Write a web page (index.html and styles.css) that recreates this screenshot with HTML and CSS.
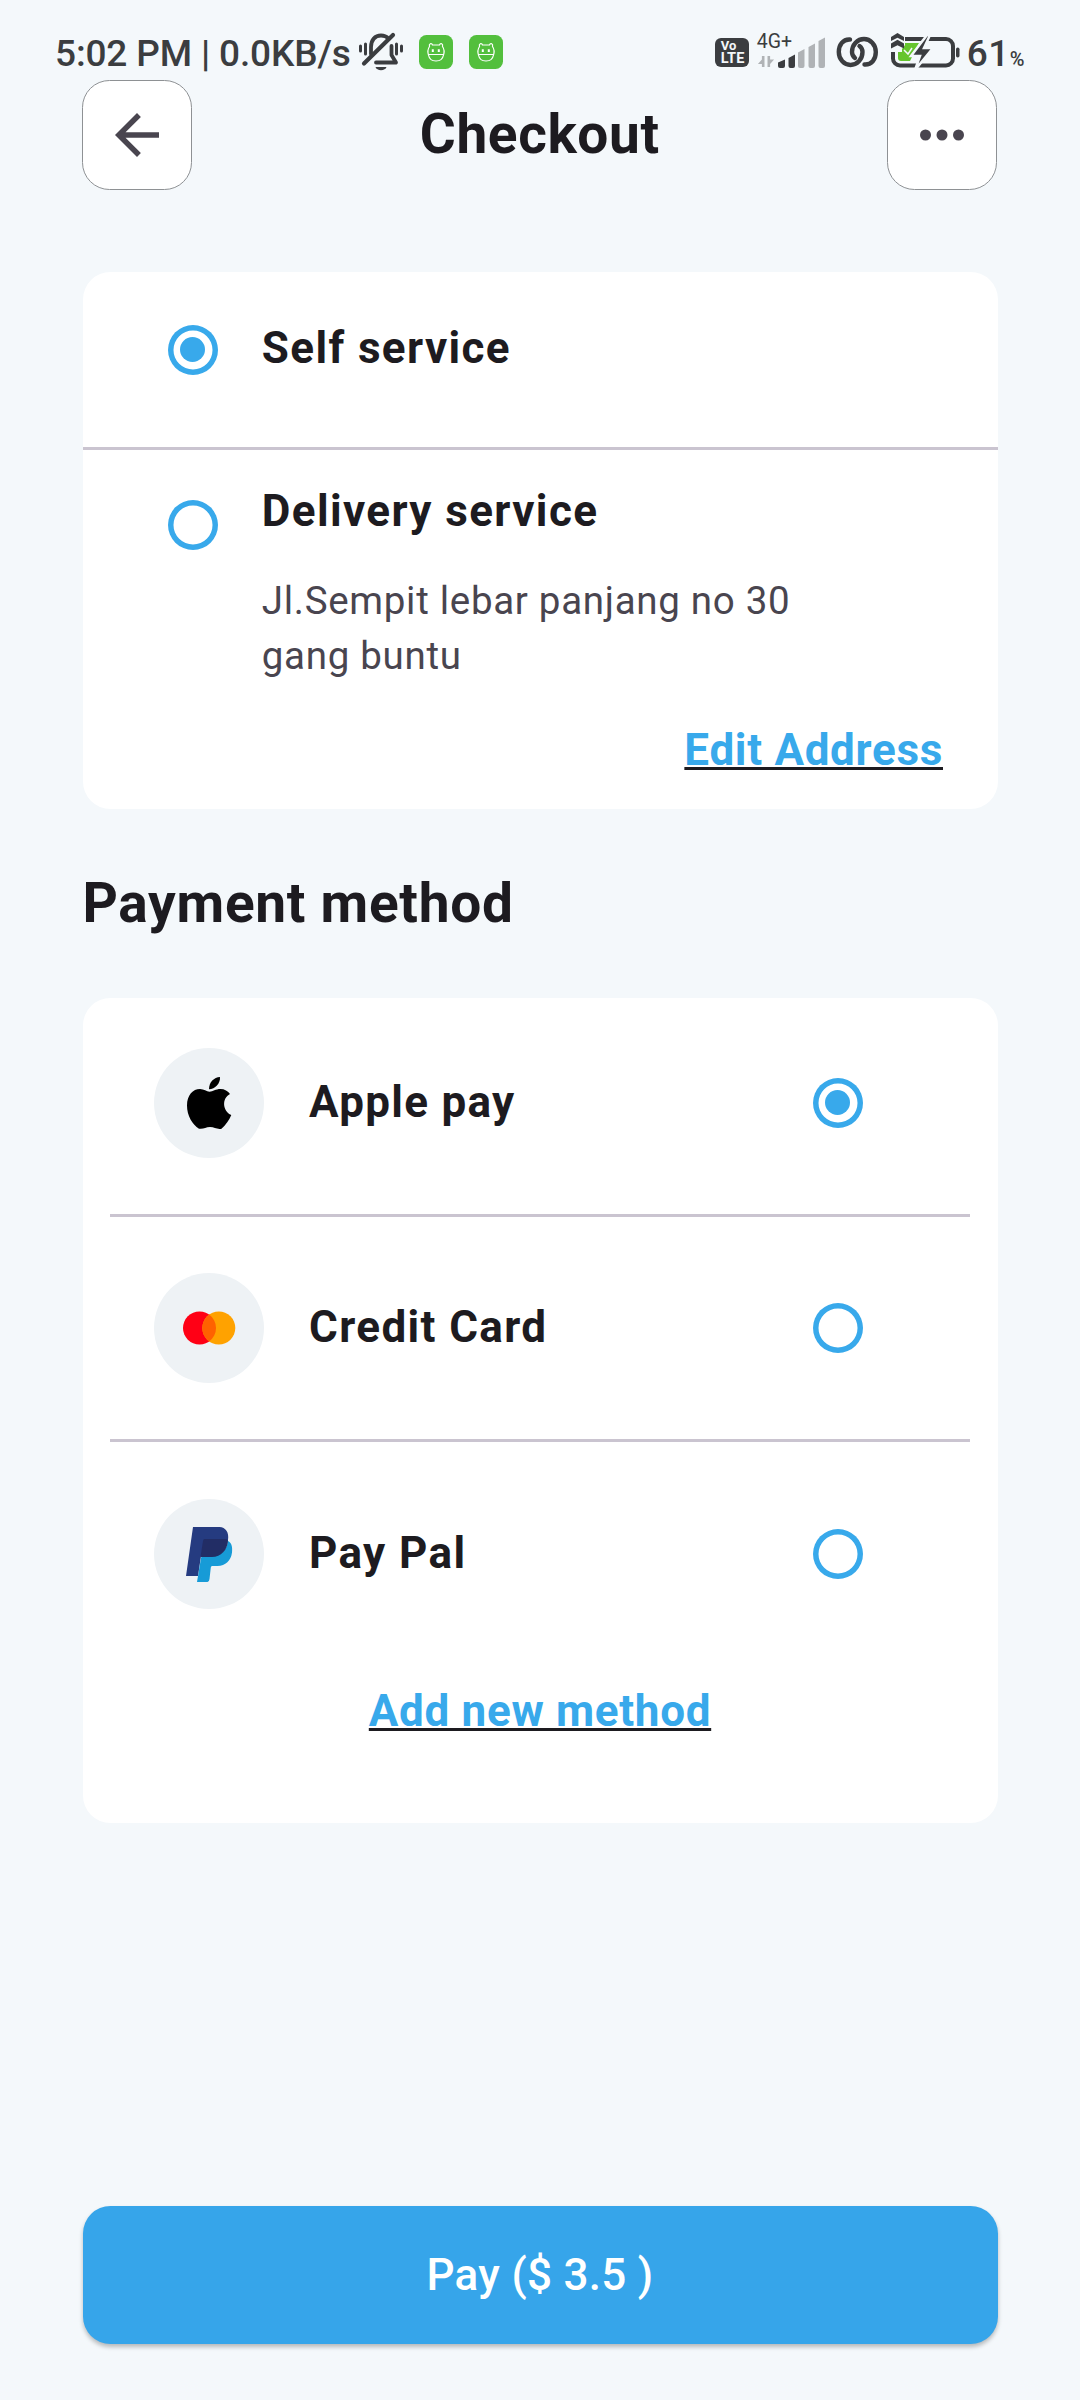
FILE: index.html
```html
<!DOCTYPE html>
<html lang="en">
<head>
<meta charset="utf-8">
<title>Checkout</title>
<link rel="stylesheet" href="styles.css">
</head>
<body>
<div class="screen">
  <div class="status">
    <div class="status-left">
      <span class="clock">5:02 PM | 0.0KB/s</span>
      <svg class="ic-bell" width="48" height="44" viewBox="0 0 48 44" fill="none" stroke="#3b3d40" stroke-linecap="round" stroke-linejoin="round">
        <path d="M3.500 16v5M8.500 14v10M39.500 14v10M44.500 16v5" stroke-width="3"/>
        <path d="M14 24V17c0-7 4-11.500 10-11.500 3 0 5.500 1 7.500 3" stroke-width="3.800"/>
        <path d="M34.500 16v9l4.500 7.500H19" stroke-width="3.800"/>
        <path d="M7 33.500L36 5" stroke-width="4.200"/>
        <path d="M18.500 37h11c-1 4.200-10 4.200-11 0z" fill="#3b3d40" stroke="none"/>
      </svg>
      <svg class="ic-app" width="34" height="34" viewBox="0 0 34 34">
        <rect width="34" height="34" rx="7.500" fill="#53bf3d"/>
        <path d="M10.500 11.500c-.8-3 2-4 3-1.500h7c1-2.500 3.800-1.500 3 1.500 2 3 1.500 7 1 8.500-1.500 8-13.500 8-15 0-.5-1.500-1-5.500 1-8.500zM9.500 19.500h15" fill="none" stroke="#fff" stroke-width="1.200"/>
        <path d="M13.800 14.200v2.800M19.800 14.200v2.800" stroke="#fff" stroke-width="2"/>
      </svg>
      <svg class="ic-app" width="34" height="34" viewBox="0 0 34 34">
        <rect width="34" height="34" rx="7.500" fill="#53bf3d"/>
        <path d="M10.500 11.500c-.8-3 2-4 3-1.500h7c1-2.500 3.800-1.500 3 1.500 2 3 1.500 7 1 8.500-1.500 8-13.500 8-15 0-.5-1.500-1-5.500 1-8.500zM9.500 19.500h15" fill="none" stroke="#fff" stroke-width="1.200"/>
        <path d="M13.800 14.200v2.800M19.800 14.200v2.800" stroke="#fff" stroke-width="2"/>
      </svg>
    </div>
    <div class="status-right">
      <div class="volte"><span class="vo">Vo</span><span class="lte">LTE</span></div>
      <div class="signal">
        <span class="net">4G+</span>
        <svg width="68" height="34" viewBox="757 36 68 34">
          <path d="M764.500 56v11h-2.600v-3h-4l4-4.500V56zM767.500 67V56h2.600v3.500h4l-4 4.500V67z" fill="#b0b3b6"/>
          <path d="M778 62.500l7-3V66q0 2-2 2h-3q-2 0-2-2z M788.500 58l6.500-3.500V66q0 2-2 2h-2.500q-2 0-2-2z" fill="#3b3d40"/>
          <path d="M798 52.500l6.500-3.500V66q0 2-2 2H800q-2 0-2-2z M808.500 47l6.500-3.500V66q0 2-2 2h-2.500q-2 0-2-2z M818.500 41l6.500-3.500V66q0 2-2 2h-2.500q-2 0-2-2z" fill="#b0b3b6"/>
        </svg>
      </div>
      <svg class="ic-link" width="42" height="32" viewBox="836 36 42 32" fill="none" stroke="#3b3d40" stroke-width="4.400" stroke-linecap="round">
        <path d="M850 39.500C843 39 838.800 45 838.800 52c0 7.500 5.500 13 11.700 13 6.500 0 12-5.500 12-13 0-2.500-1-4.500-3-6"/>
        <path d="M864.500 64.500c7 .5 11.300-5 11.300-12.500 0-7.500-5.500-13-11.800-13-6.500 0-12 5.500-12 13 0 2.500 1 4.500 3 6"/>
      </svg>
      <svg class="ic-batt" width="70" height="36" viewBox="890 33 70 36">
        <rect x="893" y="39" width="60" height="26.500" rx="7" fill="none" stroke="#3b3d40" stroke-width="4"/>
        <rect x="956" y="47.500" width="3.500" height="10" rx="1.700" fill="#3b3d40"/>
        <path d="M898 43h21l-9 18h-9q-3 0-3-3z" fill="#66c52e"/>
        <path d="M890 33h15v12l-3 4v3h-12z" fill="#f4f8fb"/>
        <path d="M891 41v-4l6.500-4 6.500 4v4l-6.500-3.200zM891 48.500v-5l6.500-3.700 6.500 3.700v5l-6.500-3.200z" fill="#3b3d40"/>
        <path d="M904 50l4 4 4-6" fill="none" stroke="#f4f8fb" stroke-width="1.500"/>
        <path d="M927 35l-16 21h9l-5 14 18-22h-9l6-13z" fill="#3b3d40" stroke="#f4f8fb" stroke-width="2.500"/>
      </svg>
      <span class="level">61</span><span class="pct">%</span>
    </div>
  </div>

  <header class="bar">
    <button class="square" aria-label="Back">
      <svg width="66" height="66" viewBox="0 0 24 24" fill="#49454f"><path d="M20 11H7.830l5.590-5.590L12 4l-8 8 8 8 1.410-1.410L7.830 13H20v-2z"/></svg>
    </button>
    <h1 class="title">Checkout</h1>
    <button class="square" aria-label="More">
      <svg width="66" height="66" viewBox="0 0 24 24" fill="#49454f"><circle cx="6" cy="12" r="2"/><circle cx="12" cy="12" r="2"/><circle cx="18" cy="12" r="2"/></svg>
    </button>
  </header>

  <main class="content">
    <section class="card service">
      <div class="option self">
        <span class="radio on"></span>
        <span class="label">Self service</span>
      </div>
      <div class="option delivery">
        <span class="radio"></span>
        <div class="details">
          <span class="label">Delivery service</span>
          <p class="address">Jl.Sempit lebar panjang no 30<br>gang buntu</p>
        </div>
      </div>
      <a class="link edit">Edit Address</a>
    </section>

    <h2 class="heading">Payment method</h2>

    <section class="card payment">
      <div class="method">
        <span class="avatar"><svg width="110" height="110" viewBox="0 0 110 110"><path d="M55 41.300C55 34 60 29.500 66 29c.5 6.500-5 12-11 12.300z"/><path d="M55.500 43.700c3.500 0 6-2.700 11-2.700 4 0 7.500 2 9.500 5-8.500 4.500-7.500 17 1.300 21-2 5-5.500 10-9.800 13.700-4.500 1-7-1.700-11.500-1.700-4.500 0-6.500 2.500-11 1.700C38.500 76.500 33 68 33 57.500 33 47 39 41 46 41c4 0 6.500 2.700 9.500 2.700z"/></svg></span>
        <span class="label apple">Apple pay</span>
        <span class="radio on"></span>
      </div>
      <div class="method">
        <span class="avatar"><svg width="110" height="110" viewBox="0 0 110 110"><circle cx="45.500" cy="55" r="16.500" fill="#ff0015"/><circle cx="64.800" cy="55" r="16.500" fill="#ffa200"/><path d="M55.150 41.600a16.500 16.500 0 0 1 0 26.800a16.500 16.500 0 0 1 0-26.800z" fill="#ff6200"/></svg></span>
        <span class="label">Credit Card</span>
        <span class="radio"></span>
      </div>
      <div class="method">
        <span class="avatar"><svg width="110" height="110" viewBox="0 0 110 110"><path d="M39 28h26.500c6 0 9.800 5.500 8.500 13-1.500 9-7.500 16-16 16H47l-3 20H32z" fill="#253b80"/><path d="M74 42c3.500 1.500 4.700 6 4 11.500C77 61.500 71.500 67 63.500 67H58q-1 0-1.200 1.500L55.500 80q-.3 3-2 3H43l4-24q.3-2 2.500-2H58c9 0 15-6.500 16-15z" fill="#179bd7"/><path d="M50.500 40H72q1 0 2 1.500C73.500 51 67 58 58 58H46.500L49 42q.2-2 1.500-2z" fill="#222d65"/></svg></span>
        <span class="label">Pay Pal</span>
        <span class="radio"></span>
      </div>
      <a class="link add">Add new method</a>
    </section>
  </main>

  <button class="pay">Pay ($ 3.5 )</button>
</div>
</body>
</html>
```
FILE: styles.css
```css
* { box-sizing: border-box; }
body {
  margin: 0;
  background: #f4f8fb;
  font-family: Roboto, "Liberation Sans", sans-serif;
  color: #1d1b20;
}
button { font: inherit; padding: 0; border: 0; }
h1, h2, p { margin: 0; }
svg { display: block; flex: none; }

.screen {
  width: 1080px;
  height: 2400px;
  display: flex;
  flex-direction: column;
}

/* Status bar */
.status {
  height: 80px;
  padding: 0 55.500px 0 55px;
  display: flex;
  justify-content: space-between;
  color: #3b3d40;
}
.status-left, .status-right { display: flex; align-items: flex-start; white-space: nowrap; }
.clock {
  width: 301px;
  margin-top: 34px;
  font-size: 37px;
  line-height: 40px;
  font-weight: 500;
  letter-spacing: -0.15px;
}
.ic-bell { margin: 30px 0 0 1px; }
.ic-app { margin: 35px 0 0 14px; }
.ic-app + .ic-app { margin-left: 16px; }
.volte {
  width: 34px;
  height: 29px;
  margin-top: 38px;
  padding: 2px 0 0 6px;
  border-radius: 6px;
  background: #3b3d40;
  color: #f4f8fb;
  display: flex;
  flex-direction: column;
  font-weight: 700;
  font-size: 13px;
  line-height: 12px;
}
.lte { font-size: 14.500px; line-height: 13px; letter-spacing: 0.1px; }
.signal { position: relative; margin: 36px 0 0 8px; }
.net {
  position: absolute;
  left: 0;
  top: -5px;
  font-size: 19.500px;
  line-height: 22px;
}
.ic-link { margin: 36px 0 0 11px; }
.ic-batt { margin: 33px 0 0 12px; }
.level {
  width: 42px;
  margin: 34px 0 0 7px;
  font-size: 37px;
  line-height: 40px;
  font-weight: 500;
  letter-spacing: 0.5px;
}
.pct { margin: 46px 0 0 1px; font-size: 20px; line-height: 26px; font-weight: 500; }

/* Header */
.bar {
  height: 110px;
  padding: 0 82.500px 0 82px;
  display: flex;
  align-items: center;
  justify-content: space-between;
}
.square {
  width: 110px;
  height: 110px;
  border: 1px solid #8e9194;
  border-radius: 27.500px;
  background: #fff;
  display: flex;
  align-items: center;
  justify-content: center;
}
.title {
  font-size: 55px;
  line-height: 64px;
  font-weight: 700;
  letter-spacing: 0.6px;
  margin-bottom: 2px;
}

/* Cards */
.content { padding: 82.400px 82.500px 0; flex: 1; }
.card { background: #fff; border-radius: 27.500px; }
.label {
  font-size: 44px;
  line-height: 52px;
  font-weight: 700;
  letter-spacing: 1.38px;
  white-space: nowrap;
}
.radio {
  flex: none;
  width: 50px;
  height: 50px;
  border-radius: 50%;
  box-shadow: inset 0 0 0 5.500px #38a9eb;
  display: flex;
  align-items: center;
  justify-content: center;
}
.radio.on::after {
  content: "";
  width: 25px;
  height: 25px;
  border-radius: 50%;
  background: #38a9eb;
}
.link {
  font-size: 44px;
  line-height: 52px;
  font-weight: 700;
  color: #38a9eb;
  letter-spacing: 0.69px;
  text-decoration: underline #1d1b20 3px;
  text-underline-offset: 2px;
  text-decoration-skip-ink: none;
}

.service { height: 536.200px; display: flex; flex-direction: column; }
.option { display: flex; align-items: flex-start; padding-left: 85px; gap: 44.300px; }
.self { height: 177.600px; padding-top: 52.300px; border-bottom: 3px solid #cac4d0; }
.self .label { margin-top: -2.300px; }
.delivery { height: 274px; padding-top: 35px; }
.delivery .radio { margin-top: 15.500px; }
.details { display: flex; flex-direction: column; }
.address {
  margin-top: 36px;
  font-size: 38.500px;
  line-height: 55px;
  letter-spacing: 0.7px;
  color: #49454f;
}
.edit { align-self: flex-end; margin-right: 54.500px; }

.heading {
  margin: 62px 0 63.300px;
  font-size: 55px;
  line-height: 64px;
  font-weight: 700;
  letter-spacing: 0.72px;
}

.payment { height: 825px; padding: 0 27.500px; display: flex; flex-direction: column; }
.method {
  height: 225.500px;
  padding: 0 107.500px 0 44px;
  display: flex;
  align-items: center;
  border-bottom: 3px solid #cac4d0;
}
.method:first-child { height: 219px; padding-bottom: 6px; }
.method:nth-child(3) { border-bottom-color: transparent; }
.avatar { width: 110px; height: 110px; border-radius: 50%; background: #eef2f5; margin-right: 45px; }
.method .label { flex: 1; margin-top: -2px; }
.method .apple { letter-spacing: 1.300px; }
.add { align-self: center; margin-top: 17px; }

.pay {
  height: 137.500px;
  margin: 0 82.500px 56.500px;
  border-radius: 27.500px;
  background: #36a5ea;
  color: #fff;
  font-size: 44px;
  font-weight: 500;
  letter-spacing: 0.3px;
  box-shadow: 0 3px 4px rgba(0, 0, 0, 0.25);
}
```
